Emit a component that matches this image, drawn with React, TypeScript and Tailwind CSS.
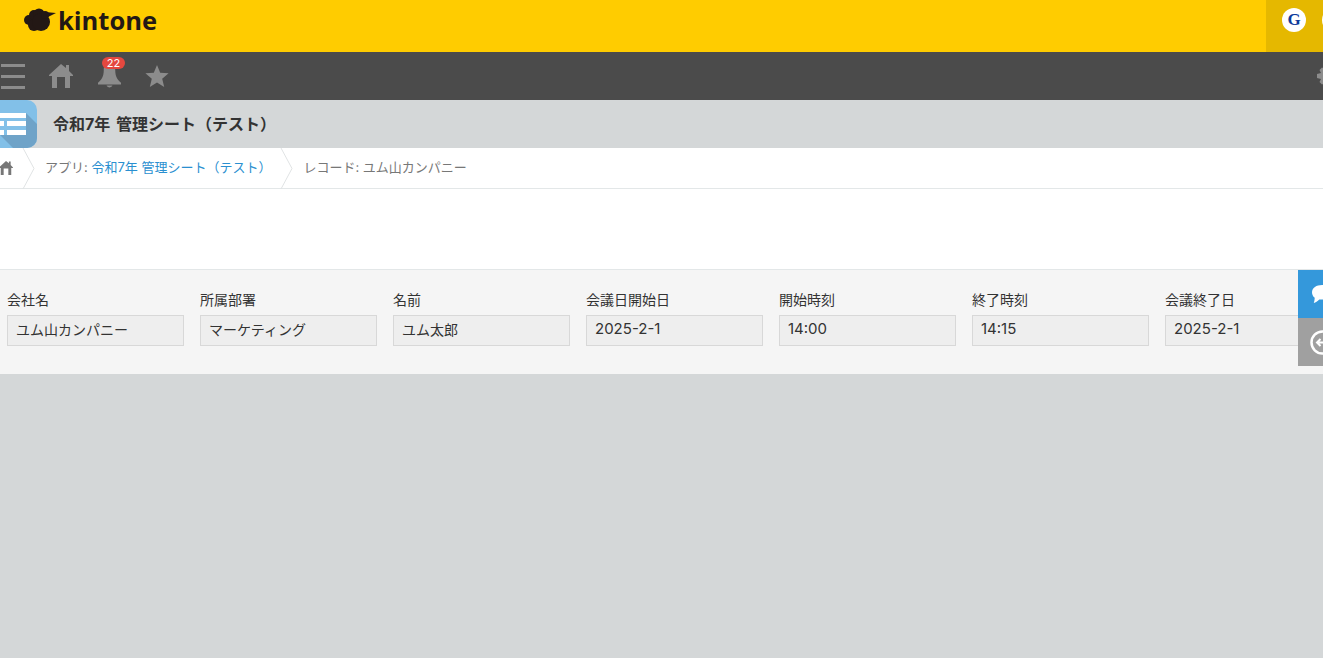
const font = { fontFamily: '"Inter", "Noto Sans CJK JP", sans-serif' };

const fields = [
  ["会社名", "ユム山カンパニー", false],
  ["所属部署", "マーケティング", false],
  ["名前", "ユム太郎", false],
  ["会議日開始日", "2025-2-1", true],
  ["開始時刻", "14:00", true],
  ["終了時刻", "14:15", true],
  ["会議終了日", "2025-2-1", true],
] as const;

function Home({ className }: { className: string }) {
  return (
    <svg viewBox="0 0 24 24" className={className} fill="currentColor">
      <path d="M12 0 L17 4 V1 H20 V7 L24 11 V12 H21 V24 H16 V13 H8 V24 H3 V12 H0 V11 Z" />
    </svg>
  );
}

function Chevron() {
  return (
    <svg viewBox="0 0 14 41" className="h-[41px] w-[14px] shrink-0" fill="none" stroke="#e0e3e4" strokeWidth="1">
      <path d="M1 0 L12 20.5 L1 41" />
    </svg>
  );
}

export default function App() {
  return (
    <div className="relative flex min-h-[658px] w-[1323px] flex-col overflow-hidden bg-[#d4d7d8]" style={font}>
      <header className="flex h-[52px] shrink-0 items-start justify-between bg-[#ffcc00]">
        <div className="ml-[24px] mt-[8px] flex h-[24px] items-center gap-[2px]">
          <svg viewBox="0 0 32 24" className="h-[24px] w-[32px]" fill="#231815">
            <circle cx="5" cy="12" r="5" />
            <circle cx="10" cy="7" r="5" />
            <circle cx="15" cy="6" r="5.5" />
            <circle cx="10" cy="17" r="6" />
            <circle cx="17" cy="14" r="9" />
            <circle cx="21" cy="7" r="4" />
            <path d="M21 4 L32 5 L24 9 Z" />
          </svg>
          <span className="text-[25.5px] font-bold leading-[24px] text-[#231815]" style={{ fontFamily: '"Open Sans", sans-serif' }}>kintone</span>
        </div>
        <div className="flex h-[52px] w-[57px] items-start bg-[#e5b800] pl-[16px] pt-[8px]">
          <div className="flex h-[24px] w-[24px] shrink-0 items-center justify-center rounded-full bg-white text-[17px] font-bold text-[#0d3a9b]" style={{ fontFamily: '"Liberation Serif", serif' }}>G</div>
          <div className="ml-[16px] h-[24px] w-[24px] shrink-0 rounded-full bg-white" />
        </div>
      </header>

      <nav className="flex h-[48px] shrink-0 items-center justify-between bg-[#4b4b4b] text-[#8c8c8c]">
        <div className="flex items-center">
          <div className="flex w-[25px] flex-col gap-[8px] pl-[1px]">
            <div className="h-[3px] bg-[#8c8c8c]" />
            <div className="h-[3px] bg-[#8c8c8c]" />
            <div className="h-[3px] bg-[#8c8c8c]" />
          </div>
          <Home className="ml-[24px] h-[24px] w-[24px]" />
          <div className="relative ml-[25px] h-[48px] w-[23px]">
            <svg viewBox="0 0 24 28" className="absolute left-0 top-[8px] h-[28px] w-[23px]" fill="currentColor">
              <path d="M12 2 C8 2 6 5 6 10 C6 16 4 20 0 23 V25 H24 V23 C20 20 18 16 18 10 C18 5 16 2 12 2 Z M9 26 H15 C15 27 13 28 12 28 C11 28 9 27 9 26 Z" />
            </svg>
            <div className="absolute left-[4px] top-[5px] flex h-[12px] w-[23px] items-center justify-center rounded-full bg-[#e5483f] text-[11px] leading-none text-white">22</div>
          </div>
          <svg viewBox="0 0 24 24" className="ml-[24px] h-[24px] w-[24px]" fill="currentColor">
            <path d="M12 1 L15.2 8.7 L23.6 9.3 L17.2 14.7 L19.2 22.9 L12 18.5 L4.8 22.9 L6.8 14.7 L0.4 9.3 L8.8 8.7 Z" />
          </svg>
        </div>
        <svg viewBox="0 0 24 24" className="mr-[-17px] h-[24px] w-[24px]" fill="currentColor">
          <path d="M10 1 H14 L15 5 L18 3.5 L20.5 6 L19 9 L23 10 V14 L19 15 L20.5 18 L18 20.5 L15 19 L14 23 H10 L9 19 L6 20.5 L3.5 18 L5 15 L1 14 V10 L5 9 L3.5 6 L6 3.5 L9 5 Z" />
        </svg>
      </nav>

      <div className="flex h-[48px] shrink-0 items-center bg-[#d4d7d8]">
        <div className="h-[48px] w-[37px] shrink-0 overflow-hidden rounded-r-[10px] bg-[#82c0e8]">
          <svg viewBox="0 0 37 48" className="h-[48px] w-[37px]">
            <path d="M26 13 L37 24 V48 H13 L0 35 V13 Z" fill="#6fa3c8" />
            <path d="M0 13 H26 V18 H0 Z M0 21 H4 V26 H0 Z M7 21 H26 V26 H7 Z M0 30 H4 V35 H0 Z M7 30 H26 V35 H7 Z" fill="#fff" />
            <path d="M0 18 H26 V21 H0 Z M0 26 H26 V30 H0 Z M4 21 H7 V26 H4 Z M4 30 H7 V35 H4 Z" fill="#82c0e8" />
          </svg>
        </div>
        <h1 className="ml-[16px] text-[16px] font-bold leading-[24px] text-[#333] [word-spacing:2px]">令和7年 管理シート（テスト）</h1>
      </div>

      <div className="flex h-[41px] shrink-0 items-center border-b border-[#e3e7e8] bg-white text-[13px] text-[#777]">
        <Home className="ml-[-1px] h-[14px] w-[14px] text-[#777]" />
        <div className="ml-[9px] flex"><Chevron /></div>
        <span className="ml-[9px]">アプリ: <span className="text-[#2a8fd0]">令和7年 管理シート（テスト）</span></span>
        <div className="ml-[9px] flex"><Chevron /></div>
        <span className="ml-[9px]">レコード: ユム山カンパニー</span>
      </div>

      <div className="h-[80px] shrink-0 bg-white" />

      <section className="flex h-[105px] shrink-0 gap-[16px] border-t border-[#e3e7e8] bg-[#f5f5f5] pl-[7px] pt-[20px]">
        {fields.map(([label, value, numeric]) => (
          <div key={label} className="w-[177px] shrink-0">
            <div className="h-[25px] text-[14px] leading-[20px] text-[#333]">{label}</div>
            <div className={numeric
              ? "flex h-[31px] items-center border border-[#d8d8d8] bg-[#eeeeee] pb-[3px] pl-[8px] text-[15px] text-[#333]"
              : "flex h-[31px] items-center border border-[#d8d8d8] bg-[#eeeeee] pb-[3px] pl-[8px] text-[14px] text-[#333]"}>{value}</div>
          </div>
        ))}
      </section>

      <div className="absolute left-[1298px] top-[270px] flex w-[25px] flex-col overflow-hidden">
        <div className="flex h-[48px] items-center bg-[#3498db] pl-[12px]">
          <svg viewBox="0 0 24 22" className="h-[20px] w-[24px] shrink-0" fill="#fff">
            <path d="M12 1 C18 1 23 4 23 9 C23 14 18 17 12 17 C11 17 10 17 9 17 C7 19 5 20 3 21 C3.5 19 4 17 4 15 C2 14 1 11 1 9 C1 4 6 1 12 1 Z" />
          </svg>
        </div>
        <div className="flex h-[48px] items-center bg-[#a0a0a0] pl-[12px]">
          <svg viewBox="0 0 25 25" className="h-[25px] w-[25px] shrink-0" fill="none" stroke="#fff" strokeWidth="2.5">
            <circle cx="12.5" cy="12.5" r="11" />
            <path d="M7 12.5 H19 M10.5 9 L7 12.5 L10.5 16" strokeWidth="2" />
          </svg>
        </div>
      </div>
    </div>
  );
}
